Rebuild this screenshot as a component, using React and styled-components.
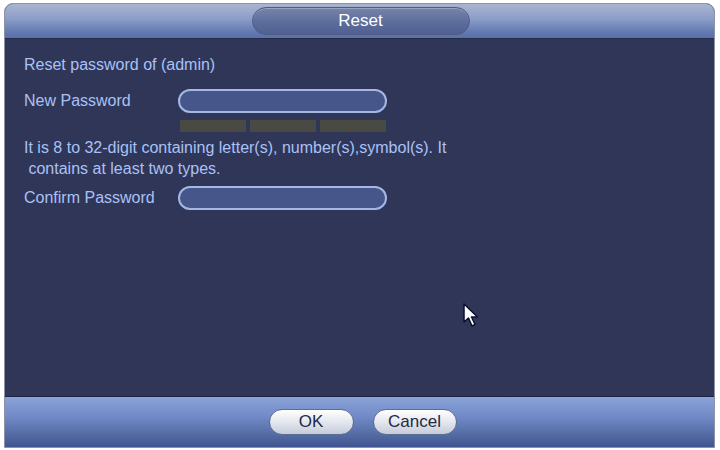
import React from 'react';
import styled, { createGlobalStyle } from 'styled-components';

const GlobalStyle = createGlobalStyle`
  html, body {
    margin: 0;
    padding: 0;
    background: #ffffff;
  }
  body {
    font-family: "Liberation Sans", Arial, sans-serif;
  }
`;

const Dialog = styled.div`
  position: relative;
  box-sizing: border-box;
  width: 711px;
  height: 445px;
  margin: 3px 0 0 4px;
  display: flex;
  flex-direction: column;
  border: 1px solid #8d93a3;
  border-radius: 9px 9px 0 0;
  overflow: hidden;
  background: #2f3658;
`;

const Header = styled.div`
  height: 34px;
  flex: none;
  display: flex;
  align-items: center;
  justify-content: center;
  background: linear-gradient(#a9b5d1 0%, #8a9cc7 45%, #6077b0 85%, #5870a8 100%);
  border-bottom: 1px solid #252b48;
`;

const TitlePill = styled.div`
  box-sizing: border-box;
  width: 218px;
  height: 28px;
  margin-left: 2px;
  border-radius: 14px;
  border: 1px solid #4e5b85;
  background: linear-gradient(#7584ab, #5b6b9b 60%, #51608f);
  box-shadow: inset 0 1px 0 rgba(255, 255, 255, 0.25);
  display: flex;
  align-items: center;
  justify-content: center;
  color: #ffffff;
  font-family: "Liberation Sans Narrow", "Liberation Sans", sans-serif;
  font-size: 17px;
`;

const Body = styled.div`
  flex: 1;
  padding: 16px 0 0 19px;
  color: #aac1f6;
  font-size: 16px;
`;

const Line = styled.div`
  line-height: 20px;
  margin-top: ${(p) => p.$mt || 0}px;
`;

const FieldRow = styled.div`
  display: flex;
  align-items: center;
  height: 24px;
  margin-top: ${(p) => p.$mt || 0}px;
`;

const Label = styled.span`
  width: 154px;
  flex: none;
`;

const Input = styled.div`
  box-sizing: border-box;
  width: 209px;
  height: 24px;
  border: 2px solid #a4b8e4;
  border-radius: 12px;
  background: #46558a;
`;

const Strength = styled.div`
  display: flex;
  gap: 4px;
  margin: 7px 0 0 156px;
`;

const Bar = styled.div`
  width: 66px;
  height: 12px;
  background: #4a4a44;
`;

const Hint = styled.div`
  margin-top: 5px;
  line-height: 21px;
  white-space: pre;
`;

const Footer = styled.div`
  height: 50px;
  flex: none;
  display: flex;
  align-items: center;
  justify-content: center;
  gap: 19px;
  padding-left: 6px;
  border-top: 1px solid #1d2340;
  background: linear-gradient(#8aa3d8 0%, #7189c6 40%, #50679f 80%, #3f5491 100%);
`;

const Button = styled.button`
  box-sizing: border-box;
  width: ${(p) => p.$w}px;
  height: 26px;
  border: 1px solid #5d6d98;
  border-radius: 13px;
  background: linear-gradient(#ffffff, #e4e7ee 50%, #c6cbd7);
  color: #1f2a45;
  font-family: "Liberation Sans Narrow", "Liberation Sans", sans-serif;
  font-size: 17px;
  padding: 0;
  cursor: pointer;
`;

const Cursor = styled.svg`
  position: absolute;
  left: 458px;
  top: 299px;
`;

const App = () => (
  <>
    <GlobalStyle />
    <Dialog>
      <Header>
        <TitlePill>Reset</TitlePill>
      </Header>
      <Body>
        <Line>Reset password of (admin)</Line>
        <FieldRow $mt={14}>
          <Label>New Password</Label>
          <Input />
        </FieldRow>
        <Strength>
          <Bar />
          <Bar />
          <Bar />
        </Strength>
        <Hint>
          {'It is 8 to 32-digit containing letter(s), number(s),symbol(s). It\n contains at least two types.'}
        </Hint>
        <FieldRow $mt={7}>
          <Label>Confirm Password</Label>
          <Input />
        </FieldRow>
      </Body>
      <Footer>
        <Button $w={85}>OK</Button>
        <Button $w={84}>Cancel</Button>
      </Footer>
      <Cursor width="18" height="26" viewBox="0 0 18 26">
        <path
          d="M1 1 L1 19 L5.5 15 L9 23 L12 21.5 L8.5 14 L14.5 14 Z"
          fill="#ffffff"
          stroke="#0c1030"
          strokeWidth="1.5"
          strokeLinejoin="round"
        />
      </Cursor>
    </Dialog>
  </>
);

export default App;
